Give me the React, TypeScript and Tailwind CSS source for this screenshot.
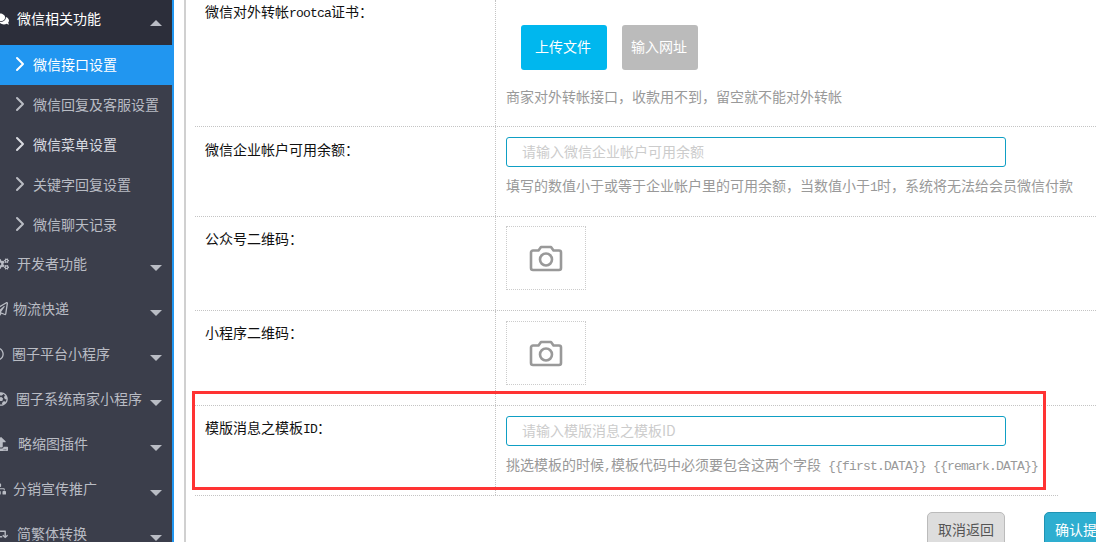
import { FaCogs, FaComments, FaRetweet, FaRegCircle, FaSitemap, FaUpload, FaRegPaperPlane, FaFutbol } from "react-icons/fa";
import { ChevronRight } from "lucide-react";
import type { ReactNode } from "react";

const subItems = [
    { label: "微信接口设置", active: true },
    { label: "微信回复及客服设置", dim: true },
    { label: "微信菜单设置" },
    { label: "关键字回复设置", dim: true },
    { label: "微信聊天记录", dim: true },
];

const groups = [
    { label: "开发者功能", icon: <FaCogs />, w: "w-[9px]", gap: "ml-[8px]" },
    { label: "物流快递", icon: <FaRegPaperPlane />, w: "w-[8px]", gap: "ml-[5px]" },
    { label: "圈子平台小程序", icon: <FaRegCircle />, w: "w-[4px]", gap: "ml-[8px]" },
    { label: "圈子系统商家小程序", icon: <FaFutbol />, w: "w-[8px]", gap: "ml-[8px]" },
    { label: "略缩图插件", icon: <FaUpload />, w: "w-[8px]", gap: "ml-[10px]" },
    { label: "分销宣传推广", icon: <FaSitemap />, w: "w-[6px]", gap: "ml-[7px]" },
    { label: "简繁体转换", icon: <FaRetweet />, w: "w-[8px]", gap: "ml-[9px]" },
];

function Arrow({ up }: { up?: boolean }) {
    return (
        <span
            className={`absolute left-[150px] top-[20px] w-0 h-0 border-x-[6px] border-x-transparent ${
                up ? "border-b-[6px] border-b-[#b9bcc4]" : "border-t-[6px] border-t-[#b9bcc4]"
            }`}
        />
    );
}

function GroupIcon({ w, children }: { w: string; children: ReactNode }) {
    return (
        <span className={`${w} h-[14px] overflow-hidden flex justify-end text-[14px] shrink-0`}>
            <span className="shrink-0">{children}</span>
        </span>
    );
}

function Sidebar() {
    return (
        <aside className="w-[174px] h-[542px] shrink-0 overflow-hidden bg-[#3b3e4b] border-r-2 border-[#2196f0] text-[14px] text-[#b9bcc4] font-['Noto_Sans_CJK_SC',sans-serif]">
            {/* current group */}
            <div className="relative h-[45px] bg-[#2c2e3a] flex items-center pb-[8px] text-white">
                <GroupIcon w="w-[9px]"><FaComments /></GroupIcon>
                <span className="ml-[8px]">微信相关功能</span>
                <Arrow up />
            </div>
            {subItems.map((item) => (
                <div
                    key={item.label}
                    className={`h-[40px] flex items-center pl-[8px] pb-[2px] ${
                        item.active ? "bg-[#2196f0] text-white" : item.dim ? "" : "text-[#d8dae0]"
                    }`}
                >
                    <ChevronRight size={24} strokeWidth={2} className="mr-[1px] shrink-0" />
                    <span>{item.label}</span>
                </div>
            ))}
            {groups.map((g) => (
                <div key={g.label} className="relative h-[45px] flex items-center pb-[8px]">
                    <GroupIcon w={g.w}>{g.icon}</GroupIcon>
                    <span className={g.gap}>{g.label}</span>
                    <Arrow />
                </div>
            ))}
        </aside>
    );
}

function Latin({ children }: { children: ReactNode }) {
    return <span className="font-['Liberation_Mono',monospace] text-[13px] tracking-[-0.8px]">{children}</span>;
}

function Hint({ children }: { children: ReactNode }) {
    return <p className="text-[14px] leading-[20px] text-[#999] whitespace-nowrap">{children}</p>;
}

function TextField({ placeholder }: { placeholder: string }) {
    return (
        <input
            readOnly
            placeholder={placeholder}
            className="block w-[500px] h-[30px] px-[15px] pb-[2px] border border-[#0f9fc4] rounded-[3px] text-[14px] outline-none placeholder:text-[#ccc] font-['Noto_Sans_CJK_SC',sans-serif]"
        />
    );
}

function PhotoBox() {
    return (
        <div className="w-[80px] h-[64px] border border-dotted border-[#ccc] flex items-center justify-center">
            <svg width="34" height="27" viewBox="0 0 34 27" fill="none" stroke="#999" strokeWidth="2.6" strokeLinejoin="round">
                <path d="M2 7.5a2 2 0 0 1 2-2h5.5L12 2h10l2.5 3.5H30a2 2 0 0 1 2 2V23a2 2 0 0 1-2 2H4a2 2 0 0 1-2-2z" />
                <circle cx="17" cy="14.5" r="6" />
            </svg>
        </div>
    );
}

function Row({ label, height, className, children }: { label: ReactNode; height: string; className?: string; children: ReactNode }) {
    return (
        <div className={`flex border-b border-dotted border-[#c4c4c4] ${height} ${className ?? ""}`}>
            <div className="w-[301px] shrink-0 pl-[10px] border-r border-dotted border-[#c4c4c4] text-[14px] leading-[20px] text-[#111]">
                {label}
            </div>
            <div className="pl-[10px] flex-1 min-w-0">{children}</div>
        </div>
    );
}

export default function App() {
    return (
        <div className="w-[1096px] h-[542px] overflow-hidden flex bg-white font-['Noto_Sans_CJK_SC',sans-serif]">
            <Sidebar />
            <main className="relative flex-1 min-w-0 h-[542px] ml-[10px] border-l-2 border-[#d0d0d0] pl-[9px]">
                <Row height="h-[127px]" label={<div className="pt-[1px]">微信对外转帐<Latin>rootca</Latin>证书：</div>}>
                    <div className="pl-[15px] pt-[25px] flex gap-[15px]">
                        <button className="w-[86px] h-[45px] pb-[2px] pr-[2px] rounded-[3px] bg-[#00b7ee] text-white text-[14px]">上传文件</button>
                        <button className="w-[76px] h-[45px] pb-[2px] pr-[2px] rounded-[3px] bg-[#bbb] text-white text-[14px]">输入网址</button>
                    </div>
                    <div className="mt-[16px]"><Hint>商家对外转帐接口，收款用不到，留空就不能对外转帐</Hint></div>
                </Row>
                <Row height="h-[90px]" label={<div className="pt-[12px]">微信企业帐户可用余额：</div>}>
                    <div className="pt-[10px]"><TextField placeholder="请输入微信企业帐户可用余额" /></div>
                    <div className="mt-[8px]"><Hint>填写的数值小于或等于企业帐户里的可用余额，当数值小于<Latin>1</Latin>时，系统将无法给会员微信付款</Hint></div>
                </Row>
                <Row height="h-[94px]" label={<div className="pt-[11px]">公众号二维码：</div>}>
                    <div className="pt-[9px]"><PhotoBox /></div>
                </Row>
                <Row height="h-[95px]" label={<div className="pt-[11px]">小程序二维码：</div>}>
                    <div className="pt-[10px]"><PhotoBox /></div>
                </Row>
                <Row height="h-[90px]" className="w-[863px]" label={<div className="pt-[11px]">模版消息之模板<Latin>ID</Latin>：</div>}>
                    <div className="pt-[10px]"><TextField placeholder="请输入模版消息之模板ID" /></div>
                    <div className="mt-[8px]">
                        <Hint>挑选模板的时候<Latin>,</Latin>模板代码中必须要包含这两个字段<Latin>{" {{first.DATA}} {{remark.DATA}}"}</Latin></Hint>
                    </div>
                </Row>
                <div className="mt-[16px] ml-[732px] flex gap-[39px] text-[14px]">
                    <button className="w-[78px] h-[40px] pb-[6px] shrink-0 rounded-[5px] border border-[#bbb] bg-[#ddd] text-[#555]">取消返回</button>
                    <button className="w-[78px] h-[40px] pb-[6px] shrink-0 rounded-[5px] border border-[#1f93b3] bg-[#2eaed0] text-white">确认提交</button>
                </div>
                {/* annotation drawn over the screenshot */}
                <div className="absolute left-[6px] top-[391px] w-[854px] h-[99px] border-[3px] border-[#f33] pointer-events-none" />
            </main>
        </div>
    );
}
